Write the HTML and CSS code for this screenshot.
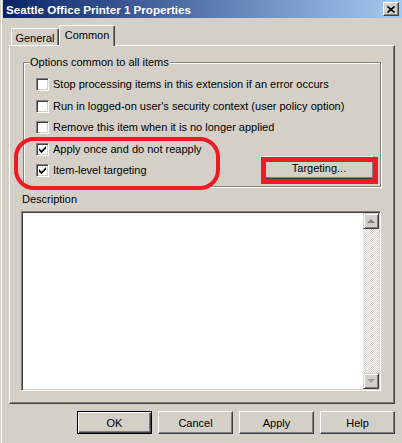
FILE: index.html
```html
<!DOCTYPE html>
<html lang="en">

<head>
    <meta charset="UTF-8">
    <meta name="viewport" content="width=device-width, initial-scale=1.0">
    <title>Seattle Office Printer 1 Properties</title>
    <link rel="stylesheet" href="styles.css">
</head>

<body>
    <div class="window">
        <div class="titlebar">
            <span class="title">Seattle Office Printer 1 Properties</span>
            <button class="close" aria-label="Close">
                <svg width="8" height="7" viewBox="0 0 8 7">
                    <path d="M0.5 0.5 L7.5 6.5 M7.5 0.5 L0.5 6.5" stroke="#000" stroke-width="1.7" />
                </svg>
            </button>
        </div>

        <div class="content">
            <div class="tabs">
                <div class="tab">General</div>
                <div class="tab active">Common</div>
            </div>

            <div class="panel">
                <fieldset class="group">
                    <legend>Options common to all items</legend>
                    <div class="options">
                        <label class="row"><span class="box"></span>Stop processing items in this extension if an error occurs</label>
                        <label class="row"><span class="box"></span>Run in logged-on user's security context (user policy option)</label>
                        <label class="row"><span class="box"></span>Remove this item when it is no longer applied</label>
                        <label class="row"><span class="box checked"><svg width="7" height="7" viewBox="0 0 7 7"><polygon points="0,2 2.5,4.5 7,0 7,2.6 2.5,7.1 0,4.6" fill="#000" /></svg></span>Apply once and do not reapply</label>
                        <div class="row">
                            <label class="row-label"><span class="box checked"><svg width="7" height="7" viewBox="0 0 7 7"><polygon points="0,2 2.5,4.5 7,0 7,2.6 2.5,7.1 0,4.6" fill="#000" /></svg></span>Item-level targeting</label>
                            <button class="btn target">Targeting...</button>
                        </div>
                    </div>
                </fieldset>

                <div class="desc-label">Description</div>
                <div class="textbox">
                    <div class="text"></div>
                    <div class="scrollbar">
                        <div class="sb-btn"><span class="arrow up"></span></div>
                        <div class="track"></div>
                        <div class="sb-btn"><span class="arrow down"></span></div>
                    </div>
                </div>
            </div>

            <div class="buttons">
                <button class="btn default">OK</button>
                <button class="btn">Cancel</button>
                <button class="btn">Apply</button>
                <button class="btn">Help</button>
            </div>
        </div>

        <!-- red annotations drawn over the dialog -->
        <div class="mark oval"></div>
        <div class="mark rect"></div>
    </div>
</body>

</html>
```
FILE: styles.css
```css
/* General Styles */
* {
    box-sizing: border-box;
}

body {
    margin: 0;
    font-family: "Liberation Sans", Arial, sans-serif;
    font-size: 11px;
    line-height: 13px;
    color: #000;
    background-color: #d4d0c8;
}

.window {
    position: relative;
    width: 402px;
    height: 443px;
    background-color: #d4d0c8;
    box-shadow: inset 1px 0 #d4d0c8, inset 2px 0 #fff;
    overflow: hidden;
}

/* Title bar */
.titlebar {
    height: 18px;
    margin-left: 3px;
    padding-left: 3px;
    display: flex;
    align-items: center;
    background: linear-gradient(to right, #0a246a, #a6caf0);
}

.title {
    flex: 1;
    color: white;
    font-weight: bold;
    font-size: 11.6px;
}

.close {
    width: 16px;
    height: 14px;
    margin-right: 3px;
    padding: 0;
    display: flex;
    align-items: center;
    justify-content: center;
    background-color: #d4d0c8;
    border: 1px solid;
    border-color: #fff #404040 #404040 #fff;
    box-shadow: inset -1px -1px #808080;
}

/* Tabs */
.content {
    padding: 8px 7px 0 9px;
}

.tabs {
    display: flex;
    align-items: flex-end;
    height: 20px;
    padding-left: 2px;
    margin-bottom: -1px;
}

.tab {
    width: 48px;
    height: 17px;
    margin-bottom: 1px;
    padding-top: 3px;
    text-align: center;
    border: 1px solid;
    border-bottom: none;
    border-color: #fff #404040 #fff #fff;
    border-radius: 2px 2px 0 0;
    box-shadow: inset -1px 0 #808080;
}

.tab.active {
    position: relative;
    z-index: 1;
    width: 56px;
    height: 21px;
    margin-bottom: 0;
    padding-top: 3px;
    background-color: #d4d0c8;
}

/* Tab panel */
.panel {
    height: 359px;
    padding: 0 13px 0 11px;
    border: 1px solid;
    border-color: #fff #404040 #404040 #fff;
    box-shadow: inset -1px -1px #808080;
}

.group {
    margin: 10px 0 0 2px;
    padding: 0 0 4px 0;
    min-width: 0;
    border: 1px solid #808080;
    box-shadow: 1px 1px 0 #fff, inset 1px 1px 0 #fff;
}

.group legend {
    margin-left: 5px;
    padding: 0 1px;
    background-color: #d4d0c8;
}

.options {
    padding: 5px 0 0 12px;
}

.row,
.row-label {
    display: flex;
    align-items: center;
}

.row {
    height: 21.5px;
}

.box {
    width: 13px;
    height: 13px;
    margin-right: 4px;
    display: flex;
    align-items: center;
    justify-content: center;
    background-color: white;
    border: 1px solid;
    border-color: #808080 #fff #fff #808080;
    box-shadow: inset 1px 1px #404040, inset -1px -1px #d4d0c8;
}

/* Buttons */
.btn {
    width: 75px;
    height: 23px;
    padding: 0;
    font-family: inherit;
    font-size: 11px;
    color: #000;
    background-color: #d4d0c8;
    border: 1px solid;
    border-color: #fff #404040 #404040 #fff;
    box-shadow: inset -1px -1px #808080;
}

.btn.default {
    border-color: #000;
    box-shadow: inset 1px 1px #fff, inset -1px -1px #404040, inset -2px -2px #808080;
}

.btn.target {
    width: 110px;
    margin: -6px 6px 0 auto;
}

.buttons {
    display: flex;
    justify-content: flex-end;
    gap: 6px;
    margin-top: 7px;
}

/* Description box */
.desc-label {
    margin-top: 6px;
    padding-left: 1px;
}

.textbox {
    height: 180px;
    margin-top: 5px;
    display: flex;
    background-color: white;
    border: 1px solid;
    border-color: #808080 #fff #fff #808080;
    box-shadow: inset 1px 1px #404040, inset -1px -1px #d4d0c8;
    padding: 1px;
}

.text {
    flex: 1;
}

.scrollbar {
    width: 16px;
    display: flex;
    flex-direction: column;
}

.sb-btn {
    height: 16px;
    display: flex;
    align-items: center;
    justify-content: center;
    background-color: #d4d0c8;
    border: 1px solid;
    border-color: #d4d0c8 #404040 #404040 #d4d0c8;
    box-shadow: inset 1px 1px #fff, inset -1px -1px #808080;
}

.track {
    flex: 1;
    background: repeating-conic-gradient(#fff 0 25%, #d4d0c8 0 50%) 0 0 / 2px 2px;
}

.arrow {
    width: 0;
    height: 0;
    border-left: 4px solid transparent;
    border-right: 4px solid transparent;
}

.arrow.up {
    border-bottom: 4px solid #808080;
}

.arrow.down {
    border-top: 4px solid #a0a0a0;
}

/* Red annotation marks */
.mark {
    position: absolute;
    border: 4px solid #ed1c24;
}

.oval {
    left: 14px;
    top: 137px;
    width: 206px;
    height: 53px;
    border-radius: 20px;
}

.rect {
    left: 261px;
    top: 157px;
    width: 117px;
    height: 27px;
    border-width: 5px;
}
```
